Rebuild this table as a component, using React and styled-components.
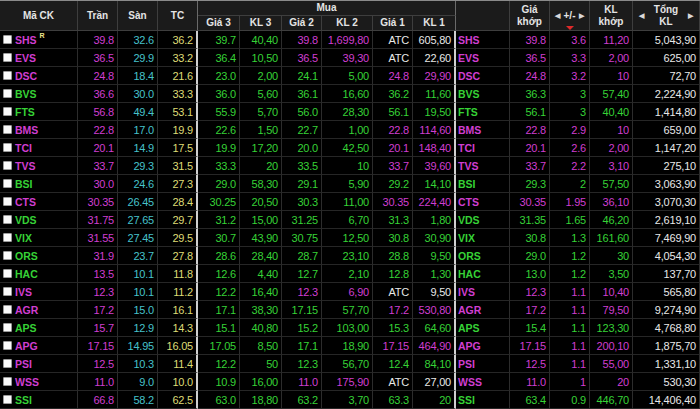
import React from 'react';
import styled, { createGlobalStyle } from 'styled-components';

const GlobalStyle = createGlobalStyle`
    html, body {
        margin: 0;
        padding: 0;
        background: #000;
    }
    body {
        font-family: "Liberation Sans", Arial, sans-serif;
    }
`;

const COLS = '78px 40px 40px 40px 42px 42px 40px 51px 40px 43px 54px 40px 40px 43px 67px';

const COLORS = {
    mag: '#d03ed0',
    green: '#36d236',
    cyan: '#46c2cb',
    yel: '#dedb76',
    white: '#e8e8e8',
    red: '#ff3a3a',
};

// sym, tran, san, tc, g3, kl3, g2, kl2, g1, kl1, khop, chg, klKhop, tong, mark
const ROWS = [
    ['SHS', '39.8', '32.6', '36.2', '39.7', '40,40', '39.8', '1,699,80', 'ATC', '605,80', '39.8', '3.6', '11,20', '5,043,90', true],
    ['EVS', '36.5', '29.9', '33.2', '36.4', '10,50', '36.5', '39,30', 'ATC', '22,60', '36.5', '3.3', '2,00', '625,00'],
    ['DSC', '24.8', '18.4', '21.6', '23.0', '2,00', '24.1', '5,00', '24.8', '29,90', '24.8', '3.2', '10', '72,70'],
    ['BVS', '36.6', '30.0', '33.3', '36.0', '5,60', '36.1', '16,60', '36.2', '11,60', '36.3', '3', '57,40', '2,224,90'],
    ['FTS', '56.8', '49.4', '53.1', '55.9', '5,70', '56.0', '28,30', '56.1', '19,50', '56.1', '3', '40,40', '1,414,80'],
    ['BMS', '22.8', '17.0', '19.9', '22.6', '1,50', '22.7', '1,00', '22.8', '114,60', '22.8', '2.9', '10', '659,00'],
    ['TCI', '20.1', '14.9', '17.5', '19.9', '17,20', '20.0', '42,50', '20.1', '148,40', '20.1', '2.6', '2,00', '1,147,20'],
    ['TVS', '33.7', '29.3', '31.5', '33.3', '20', '33.5', '10', '33.7', '39,60', '33.7', '2.2', '3,10', '275,10'],
    ['BSI', '30.0', '24.6', '27.3', '29.0', '58,30', '29.1', '5,90', '29.2', '14,10', '29.3', '2', '57,50', '3,063,90'],
    ['CTS', '30.35', '26.45', '28.4', '30.25', '20,50', '30.3', '11,00', '30.35', '224,40', '30.35', '1.95', '36,10', '3,070,30'],
    ['VDS', '31.75', '27.65', '29.7', '31.2', '15,00', '31.25', '6,70', '31.3', '1,80', '31.35', '1.65', '46,20', '2,619,10'],
    ['VIX', '31.55', '27.45', '29.5', '30.7', '43,90', '30.75', '12,50', '30.8', '30,90', '30.8', '1.3', '161,60', '7,469,90'],
    ['ORS', '31.9', '23.7', '27.8', '28.6', '28,40', '28.7', '23,10', '28.8', '9,50', '29.0', '1.2', '30', '4,054,30'],
    ['HAC', '13.5', '10.1', '11.8', '12.6', '4,40', '12.7', '2,10', '12.8', '1,30', '13.0', '1.2', '3,50', '137,70'],
    ['IVS', '12.3', '10.1', '11.2', '12.2', '16,40', '12.3', '6,90', 'ATC', '9,50', '12.3', '1.1', '10,40', '565,80'],
    ['AGR', '17.2', '15.0', '16.1', '17.1', '38,30', '17.15', '57,70', '17.2', '530,80', '17.2', '1.1', '79,50', '9,274,90'],
    ['APS', '15.7', '12.9', '14.3', '15.1', '40,80', '15.2', '103,00', '15.3', '64,60', '15.4', '1.1', '123,30', '4,768,80'],
    ['APG', '17.15', '14.95', '16.05', '17.05', '8,50', '17.1', '18,90', '17.15', '464,90', '17.15', '1.1', '200,10', '1,875,70'],
    ['PSI', '12.5', '10.3', '11.4', '12.2', '50', '12.3', '56,70', '12.4', '84,10', '12.5', '1.1', '55,00', '1,331,10'],
    ['WSS', '11.0', '9.0', '10.0', '10.9', '16,00', '11.0', '175,90', 'ATC', '27,00', '11.0', '1', '20', '530,30'],
    ['SSI', '66.8', '58.2', '62.5', '63.0', '18,80', '63.2', '3,70', '63.3', '20', '63.4', '0.9', '446,70', '14,406,40'],
];

const toneOf = (price, tran, san, tc) => {
    if (price === 'ATC') return 'white';
    const v = parseFloat(price);
    if (v === parseFloat(tran)) return 'mag';
    if (v === parseFloat(san)) return 'cyan';
    if (v === parseFloat(tc)) return 'yel';
    return v > parseFloat(tc) ? 'green' : 'red';
};

const Board = styled.div`
    width: 700px;
    height: 409px;
    overflow: hidden;
    background: #000;
    border-top: 1px solid #8a8a8a;
    box-sizing: border-box;
`;

const Header = styled.div`
    display: grid;
    grid-template-columns: ${COLS};
    grid-template-rows: 15px 15px;
    background: #1b1b1b;
`;

const HeadCell = styled.div`
    grid-column: ${p => p.$col};
    grid-row: ${p => p.$row || '1 / 3'};
    display: flex;
    align-items: center;
    justify-content: center;
    text-align: center;
    color: #e4e4e4;
    font-size: 10px;
    font-weight: bold;
    line-height: 12px;
    border-right: 1px solid ${p => (p.$strong ? '#6a6a6a' : '#3e3e3e')};
    border-bottom: 1px solid #3e3e3e;
    box-sizing: border-box;
    gap: ${p => p.$gap || '5px'};
    position: relative;
`;

const Arrow = styled.span`
    font-size: 7px;
    color: #d8d8d8;
`;

const SortMark = styled.span`
    position: absolute;
    left: 50%;
    bottom: 0;
    margin-left: -4px;
    width: 0;
    height: 0;
    border-left: 4px solid transparent;
    border-right: 4px solid transparent;
    border-top: 4px solid #e02a2a;
`;

const Row = styled.div`
    display: grid;
    grid-template-columns: ${COLS};
    height: 18px;
`;

const Cell = styled.div`
    display: flex;
    align-items: center;
    justify-content: ${p => (p.$left ? 'flex-start' : 'flex-end')};
    padding: ${p => (p.$left ? '0 0 0 2px' : '0 3px 0 0')};
    font-size: 11px;
    letter-spacing: -0.2px;
    color: ${p => COLORS[p.$tone] || COLORS.white};
    border-right: ${p => (p.$strong ? '2px solid #cfcfcf' : '1px solid #2c2c2c')};
    border-bottom: 1px solid #262626;
    box-sizing: border-box;
    white-space: nowrap;
    overflow: hidden;
`;

const Symbol = styled.span`
    font-weight: bold;
    font-size: 10.5px;
    letter-spacing: 0;
    color: ${p => COLORS[p.$tone]};
`;

const Check = styled.span`
    display: inline-block;
    width: 9px;
    height: 9px;
    margin: 0 3px 0 1px;
    background: #fafafa;
    border: 1px solid #9a9a9a;
    box-sizing: border-box;
    border-radius: 1px;
`;

const Mark = styled.sup`
    font-size: 7px;
    font-weight: bold;
    color: #ece38a;
    margin-left: 3px;
    align-self: flex-start;
    line-height: 10px;
`;

const BoardRow = ({ r }) => {
    const [sym, tran, san, tc, g3, kl3, g2, kl2, g1, kl1, khop, chg, klKhop, tong, mark] = r;
    const t = p => toneOf(p, tran, san, tc);
    const symTone = t(khop);
    return (
        <Row>
            <Cell $left>
                <Check />
                <Symbol $tone={symTone}>{sym}</Symbol>
                {mark && <Mark>R</Mark>}
            </Cell>
            <Cell $tone="mag">{tran}</Cell>
            <Cell $tone="cyan">{san}</Cell>
            <Cell $tone="yel" $strong>{tc}</Cell>
            <Cell $tone={t(g3)}>{g3}</Cell>
            <Cell $tone={t(g3)}>{kl3}</Cell>
            <Cell $tone={t(g2)}>{g2}</Cell>
            <Cell $tone={t(g2)}>{kl2}</Cell>
            <Cell $tone={t(g1)}>{g1}</Cell>
            <Cell $tone={t(g1)} $strong>{kl1}</Cell>
            <Cell $left>
                <Symbol $tone={symTone}>{sym}</Symbol>
            </Cell>
            <Cell $tone={symTone}>{khop}</Cell>
            <Cell $tone={symTone}>{chg}</Cell>
            <Cell $tone={symTone}>{klKhop}</Cell>
            <Cell $tone="white">{tong}</Cell>
        </Row>
    );
};

const App = () => (
    <>
        <GlobalStyle />
        <Board>
            <Header>
                <HeadCell $col="1">Mã CK</HeadCell>
                <HeadCell $col="2">Trần</HeadCell>
                <HeadCell $col="3">Sàn</HeadCell>
                <HeadCell $col="4" $strong>TC</HeadCell>
                <HeadCell $col="5 / 11" $row="1" $strong>Mua</HeadCell>
                <HeadCell $col="5" $row="2">Giá 3</HeadCell>
                <HeadCell $col="6" $row="2">KL 3</HeadCell>
                <HeadCell $col="7" $row="2">Giá 2</HeadCell>
                <HeadCell $col="8" $row="2">KL 2</HeadCell>
                <HeadCell $col="9" $row="2">Giá 1</HeadCell>
                <HeadCell $col="10" $row="2" $strong>KL 1</HeadCell>
                <HeadCell $col="11" />
                <HeadCell $col="12">Giá<br />khớp</HeadCell>
                <HeadCell $col="13" $gap="4px">
                    <Arrow>◀</Arrow>+/-<Arrow>▶</Arrow>
                    <SortMark />
                </HeadCell>
                <HeadCell $col="14">KL<br />khớp</HeadCell>
                <HeadCell $col="15" $gap="10px">
                    <Arrow>◀</Arrow>
                    <span>Tổng<br />KL</span>
                    <Arrow>▶</Arrow>
                </HeadCell>
            </Header>
            {ROWS.map(r => (
                <BoardRow key={r[0]} r={r} />
            ))}
        </Board>
    </>
);

export default App;
